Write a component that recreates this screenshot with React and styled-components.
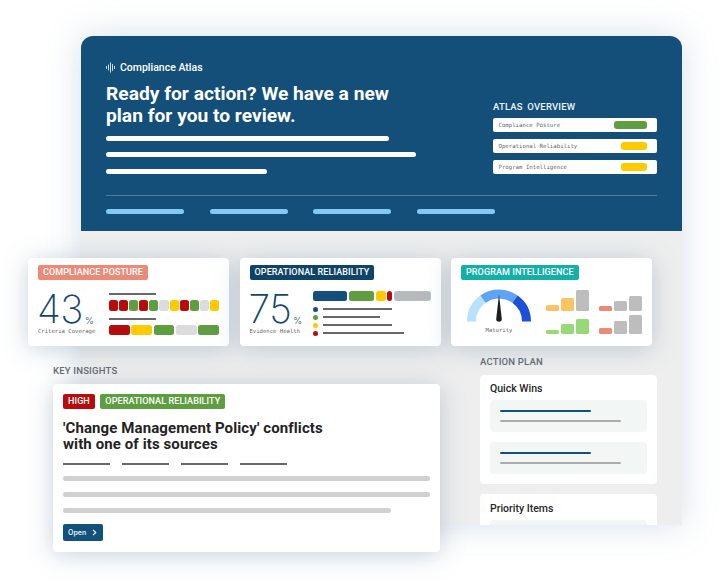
import React from "react";
import styled, { createGlobalStyle } from "styled-components";

const Global = createGlobalStyle`
  html, body { margin: 0; padding: 0; background: #fff; }
  body { font-family: Roboto, "Liberation Sans", sans-serif; }
  * { box-sizing: border-box; }
`;

const NAVY = "#124f7a";
const GREEN = "#5e9e41";
const RED = "#b80b0b";
const YELLOW = "#fecb00";
const LIGHT = "#dcdcdc";

const Stage = styled.div`
  position: relative;
  width: 720px;
  height: 583px;
  padding: 36px 38px 58px 81px;
  overflow: hidden;
`;

const Frame = styled.div`
  width: 601px;
  height: 489px;
  border-radius: 12px 12px 0 0;
  background: #eeeeee;
  box-shadow: 0 0 34px rgba(120, 150, 180, 0.3);
  overflow: hidden;
`;

const Hero = styled.header`
  height: 195px;
  background: #134f79;
  padding: 24px 25px 0 25px;
  color: #fff;
`;

const HeroTop = styled.div`
  display: flex;
  justify-content: space-between;
  height: 135px;
`;

const Brand = styled.div`
  display: flex;
  align-items: center;
  gap: 5px;
  height: 14px;
  font-size: 10.5px;
  font-weight: 500;
  margin-bottom: 9px;
`;

const Headline = styled.h1`
  margin: 0 0 9px;
  font-size: 19.2px;
  line-height: 22px;
  font-weight: 700;
`;

const HeroLine = styled.div`
  width: ${({ $w }) => $w}px;
  height: 5px;
  border-radius: 3px;
  background: #fff;
  margin-bottom: 11.25px;
`;

const Overview = styled.aside`
  width: 164px;
  padding-top: 41px;
`;

const OverviewTitle = styled.div`
  font-size: 9.5px;
  font-weight: 500;
  word-spacing: 2px;
  letter-spacing: 0.2px;
  line-height: 12px;
  margin-bottom: 5px;
  color: #eef5fa;
`;

const OverviewRow = styled.div`
  display: flex;
  align-items: center;
  justify-content: space-between;
  height: 14px;
  margin-bottom: 7px;
  padding: 0 10px 0 5.5px;
  background: #fff;
  border-radius: 2px;
  font-family: "DejaVu Sans Mono", monospace;
  font-size: 5.7px;
  color: #666;
`;

const StatusPill = styled.span`
  width: ${({ $w }) => $w}px;
  height: 8px;
  border-radius: 3px;
  background: ${({ $c }) => $c};
`;

const Divider = styled.div`
  height: 1px;
  background: #4f7c9e;
  margin-bottom: 13px;
`;

const TabRow = styled.div`
  display: flex;
  gap: 25.5px;
`;

const Tab = styled.div`
  width: 78px;
  height: 5px;
  border-radius: 3px;
  background: #86c8f4;
`;

const PlanColumn = styled.section`
  width: 177px;
  margin: 125px 25px 0 auto;
`;

const SectionLabel = styled.div`
  font-size: 9.5px;
  line-height: 12px;
  font-weight: 500;
  letter-spacing: 0.2px;
  color: #636a72;
  margin-left: ${({ $left }) => $left ?? 0}px;
  margin-bottom: ${({ $gap }) => $gap}px;
`;

const PlanCard = styled.div`
  background: #fff;
  border-radius: 4px;
  padding: 8.5px 10px 10px;
  margin-bottom: 10px;
`;

const PlanTitle = styled.div`
  font-size: 10.5px;
  line-height: 12px;
  font-weight: 500;
  color: #262626;
  margin-bottom: 5px;
`;

const PlanItem = styled.div`
  height: 32px;
  border-radius: 4px;
  background: #f2f6f5;
  padding: 9.5px 10px 0;
  margin-bottom: 10px;
  &:last-child { margin-bottom: 0; }
`;

const PlanLine = styled.div`
  width: ${({ $w }) => $w}px;
  height: 2.5px;
  border-radius: 1px;
  background: ${({ $c }) => $c};
  margin-bottom: 7.5px;
`;

// the cards float over the frame and hang out past its left edge
const Overlay = styled.div`
  position: absolute;
  left: 28px;
  top: 258px;
  width: 624px;
`;

const CardRow = styled.div`
  display: flex;
  gap: 10.5px;
  margin-bottom: 19px;
`;

const Card = styled.article`
  width: 201px;
  height: 88px;
  background: #fff;
  border-radius: 4px;
  padding: 7px 10px 0;
  box-shadow: 0 3px 24px rgba(95, 125, 155, 0.34);
`;

const Badge = styled.span`
  display: block;
  width: fit-content;
  height: 15px;
  line-height: 15px;
  padding: 0 5px;
  border-radius: 2px;
  background: ${({ $c }) => $c};
  color: #fff;
  font-size: 9px;
  font-weight: 500;
  letter-spacing: 0.1px;
  white-space: nowrap;
`;

const CardBody = styled.div`
  display: flex;
  justify-content: space-between;
  margin-top: ${({ $top }) => $top}px;
`;

const StatBlock = styled.div`
  width: 62px;
  flex: none;
`;

const Figure = styled.div`
  display: flex;
  align-items: flex-end;
  gap: 2px;
  height: 32px;
  margin-left: -1px;
  color: #14466c;
  font-family: Inter, sans-serif;
  font-size: 39px;
  line-height: 32px;
  font-weight: 250;
  letter-spacing: -0.5px;
`;

const Percent = styled.span`
  font-size: 9px;
  line-height: 9px;
  font-weight: 400;
  color: #3f7197;
  letter-spacing: 0;
`;

const MonoCaption = styled.div`
  margin-top: ${({ $top }) => $top}px;
  font-family: "DejaVu Sans Mono", monospace;
  font-size: 5.6px;
  line-height: 8px;
  color: #666;
  white-space: nowrap;
  text-align: ${({ $center }) => ($center ? "center" : "left")};
`;

const Meters = styled.div`
  width: 110px;
`;

const Rule = styled.div`
  width: ${({ $w }) => $w}px;
  height: 2px;
  background: #686868;
  margin-bottom: ${({ $gap }) => $gap ?? 5}px;
`;

const BlockRow = styled.div`
  display: flex;
  gap: ${({ $gap }) => $gap}px;
  height: ${({ $h }) => $h}px;
  margin-bottom: 7px;
`;

const Block = styled.span`
  flex: 1;
  border-radius: 2.5px;
  background: ${({ $c }) => $c};
`;

const Reliability = styled.div`
  width: 118px;
  margin-top: -2px;
`;

const StackBar = styled.div`
  display: flex;
  gap: 1.5px;
  height: 10px;
  margin-bottom: 4px;
`;

const Segment = styled.span`
  width: ${({ $w }) => $w}px;
  border-radius: 2.5px;
  background: ${({ $c }) => $c};
  border: ${({ $edge }) => ($edge ? "1px solid #a9c3dc" : "none")};
`;

const LegendRow = styled.div`
  display: flex;
  align-items: center;
  gap: 5px;
  height: 8px;
`;

const Dot = styled.span`
  width: 5px;
  height: 5px;
  border-radius: 50%;
  background: ${({ $c }) => $c};
`;

const LegendLine = styled.span`
  width: ${({ $w }) => $w}px;
  height: 2px;
  background: #686868;
`;

const GaugeBlock = styled.div`
  width: 66px;
  margin-left: 5px;
  flex: none;
  svg { display: block; }
`;

const ChartGrid = styled.div`
  width: 96px;
  display: grid;
  grid-template-columns: 43px 43px;
  column-gap: 10px;
  row-gap: 1px;
`;

const MiniChart = styled.div`
  display: flex;
  align-items: flex-end;
  gap: 1.5px;
  height: 21.5px;
`;

const MiniBar = styled.span`
  width: 13.5px;
  height: ${({ $h }) => $h}px;
  border-radius: 1.5px;
  background: ${({ $c }) => $c};
`;

const InsightCard = styled.article`
  width: 387px;
  height: 168px;
  margin-left: 25px;
  background: #fff;
  border-radius: 4px;
  padding: 10px 10px 0;
  box-shadow: 0 3px 24px rgba(95, 125, 155, 0.34);
`;

const TagRow = styled.div`
  display: flex;
  gap: 5.5px;
  margin-bottom: 10.5px;
`;

const InsightTitle = styled.h2`
  margin: 0 0 10px;
  font-size: 15px;
  line-height: 16.5px;
  font-weight: 700;
  color: #232323;
  letter-spacing: 0.1px;
`;

const MetaRow = styled.div`
  display: flex;
  gap: 12px;
  margin-bottom: 11.5px;
`;

const TextBar = styled.div`
  width: ${({ $w }) => $w}px;
  height: 5px;
  border-radius: 3px;
  background: #d0d0d0;
  margin-bottom: 11px;
`;

const OpenButton = styled.button`
  display: flex;
  align-items: center;
  justify-content: space-between;
  width: 40px;
  height: 17px;
  margin-top: 2px;
  padding: 0 6px 0 5px;
  border: 0;
  border-radius: 2px;
  background: #12507d;
  color: #e8f1f7;
  font-family: Inter, sans-serif;
  font-size: 7px;
  font-weight: 600;
`;

function WaveLogo() {
  return (
    <svg width="9" height="11" viewBox="0 0 9 11">
      <path
        d="M.5 4.5v2M2.5 3v5M4.5 .8v9.4M6.5 2.5v6M8.5 4.5v2"
        stroke="#fff"
        strokeWidth="0.8"
        strokeLinecap="round"
      />
    </svg>
  );
}

function Gauge() {
  return (
    <svg width="66" height="36" viewBox="0 0 66 36">
      <g fill="none" strokeWidth="9">
        <path d="M5.5 32.5A27.5 27.5 0 0 1 17 10.2" stroke="#b8e1fb" />
        <path d="M17 10.2A27.5 27.5 0 0 1 49 10.2" stroke="#5ea3f6" />
        <path d="M49 10.2A27.5 27.5 0 0 1 60.5 32.5" stroke="#1b50d8" />
      </g>
      <path d="M33 5.5L35.8 30a2.8 2.8 0 0 1-5.6 0Z" fill="#1e1e1e" />
    </svg>
  );
}

const ORANGE = "#fbc463";
const SALMON = "#ec8a78";
const GREY = "#bdbdbd";
const LIME = "#98d977";

const charts = [
  [[6, ORANGE], [13, ORANGE], [21, GREY]],
  [[5, SALMON], [10, GREY], [15, GREY]],
  [[4, LIME], [10, LIME], [15, LIME]],
  [[6, SALMON], [13, GREY], [19, GREY]],
];

const coverage = [RED, RED, GREEN, RED, GREEN, LIGHT, YELLOW, RED, GREEN, LIGHT, YELLOW];
const overview = [
  ["Compliance Posture", 33, GREEN],
  ["Operational Reliability", 26, YELLOW],
  ["Program Intelligence", 26, YELLOW],
];

export default function App() {
  return (
    <Stage>
      <Global />
      <Frame>
        <Hero>
          <HeroTop>
            <div>
              <Brand>
                <WaveLogo />
                Compliance Atlas
              </Brand>
              <Headline>
                Ready for action? We have a new
                <br />
                plan for you to review.
              </Headline>
              <HeroLine $w={283} />
              <HeroLine $w={310} />
              <HeroLine $w={161} />
            </div>
            <Overview>
              <OverviewTitle>ATLAS OVERVIEW</OverviewTitle>
              {overview.map(([label, w, c]) => (
                <OverviewRow key={label}>
                  {label}
                  <StatusPill $w={w} $c={c} />
                </OverviewRow>
              ))}
            </Overview>
          </HeroTop>
          <Divider />
          <TabRow>
            <Tab />
            <Tab />
            <Tab />
            <Tab />
          </TabRow>
        </Hero>
        <PlanColumn>
          <SectionLabel $gap={6.5}>ACTION PLAN</SectionLabel>
          <PlanCard>
            <PlanTitle>Quick Wins</PlanTitle>
            <PlanItem>
              <PlanLine $w={91} $c={NAVY} />
              <PlanLine $w={121} $c="#ababab" />
            </PlanItem>
            <PlanItem>
              <PlanLine $w={91} $c={NAVY} />
              <PlanLine $w={121} $c="#ababab" />
            </PlanItem>
          </PlanCard>
          <PlanCard>
            <PlanTitle>Priority Items</PlanTitle>
            <PlanItem />
          </PlanCard>
        </PlanColumn>
      </Frame>

      <Overlay>
        <CardRow>
          <Card>
            <Badge $c={SALMON}>COMPLIANCE POSTURE</Badge>
            <CardBody $top={13}>
              <StatBlock>
                <Figure>
                  43<Percent>%</Percent>
                </Figure>
                <MonoCaption $top={2}>Criteria Coverage</MonoCaption>
              </StatBlock>
              <Meters>
                <Rule $w={47} />
                <BlockRow $gap={1} $h={11}>
                  {coverage.map((c, i) => (
                    <Block key={i} $c={c} />
                  ))}
                </BlockRow>
                <Rule $w={47} />
                <BlockRow $gap={1.5} $h={10}>
                  {[RED, YELLOW, GREEN, LIGHT, GREEN].map((c, i) => (
                    <Block key={i} $c={c} />
                  ))}
                </BlockRow>
              </Meters>
            </CardBody>
          </Card>
          <Card>
            <Badge $c="#0f4367">OPERATIONAL RELIABILITY</Badge>
            <CardBody $top={13}>
              <StatBlock>
                <Figure>
                  75<Percent>%</Percent>
                </Figure>
                <MonoCaption $top={2}>Evidence Health</MonoCaption>
              </StatBlock>
              <Reliability>
                <StackBar>
                  <Segment $w={35} $c={NAVY} />
                  <Segment $w={26} $c={GREEN} />
                  <Segment $w={10} $c={YELLOW} />
                  <Segment $w={5} $c={RED} />
                  <Segment $w={37} $c="#b9b9b9" $edge />
                </StackBar>
                <LegendRow>
                  <Dot $c={NAVY} />
                  <LegendLine $w={69} />
                </LegendRow>
                <LegendRow>
                  <Dot $c={GREEN} />
                  <LegendLine $w={57} />
                </LegendRow>
                <LegendRow>
                  <Dot $c={YELLOW} />
                  <LegendLine $w={69} />
                </LegendRow>
                <LegendRow>
                  <Dot $c={RED} />
                  <LegendLine $w={81} />
                </LegendRow>
              </Reliability>
            </CardBody>
          </Card>
          <Card>
            <Badge $c="#13b0aa">PROGRAM INTELLIGENCE</Badge>
            <CardBody $top={9}>
              <GaugeBlock>
                <Gauge />
                <MonoCaption $top={1} $center>
                  Maturity
                </MonoCaption>
              </GaugeBlock>
              <ChartGrid>
                {charts.map((bars, i) => (
                  <MiniChart key={i}>
                    {bars.map(([h, c], j) => (
                      <MiniBar key={j} $h={h} $c={c} />
                    ))}
                  </MiniChart>
                ))}
              </ChartGrid>
            </CardBody>
          </Card>
        </CardRow>

        <SectionLabel $left={25} $gap={7}>KEY INSIGHTS</SectionLabel>
        <InsightCard>
          <TagRow>
            <Badge $c={RED}>HIGH</Badge>
            <Badge $c={GREEN}>OPERATIONAL RELIABILITY</Badge>
          </TagRow>
          <InsightTitle>
            'Change Management Policy' conflicts
            <br />
            with one of its sources
          </InsightTitle>
          <MetaRow>
            <Rule $w={47} $gap={0} />
            <Rule $w={47} $gap={0} />
            <Rule $w={47} $gap={0} />
            <Rule $w={47} $gap={0} />
          </MetaRow>
          <TextBar $w={367} />
          <TextBar $w={367} />
          <TextBar $w={328} />
          <OpenButton>
            Open
            <svg width="5" height="7" viewBox="0 0 5 7">
              <path d="M1 .8L3.8 3.5 1 6.2" fill="none" stroke="#fff" strokeWidth="1.1" />
            </svg>
          </OpenButton>
        </InsightCard>
      </Overlay>
    </Stage>
  );
}
